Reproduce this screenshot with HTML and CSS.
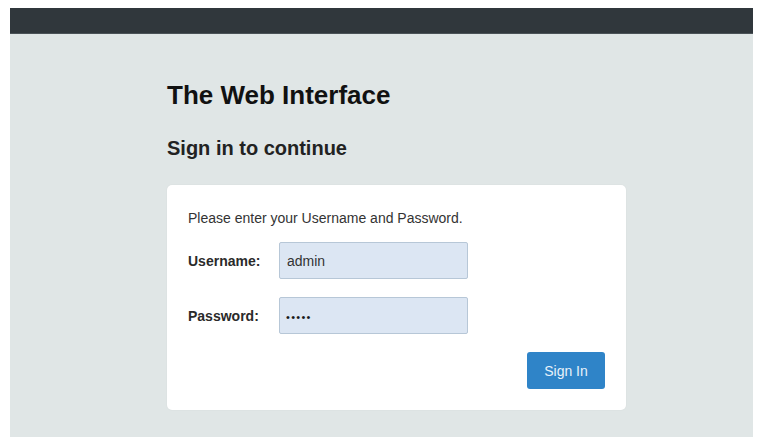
FILE: index.html
```html
<!DOCTYPE html>
<html lang="en">
<head>
<meta charset="utf-8">
<title>The Web Interface</title>
<link rel="stylesheet" href="styles.css">
</head>
<body>
<div class="page">
  <div class="topbar"></div>
  <main class="main">
    <h1 class="title">The Web Interface</h1>
    <h2 class="subtitle">Sign in to continue</h2>
    <form class="card">
      <p class="intro">Please enter your Username and Password.</p>
      <div class="row">
        <label class="label" for="user">Username:</label>
        <input class="field" id="user" type="text" value="admin">
      </div>
      <div class="row">
        <label class="label" for="pass">Password:</label>
        <input class="field field-secret" id="pass" type="password" value="admin">
      </div>
      <div class="actions">
        <button class="btn" type="button">Sign In</button>
      </div>
    </form>
  </main>
</div>
</body>
</html>
```

FILE: styles.css
```css
html, body {
  background: #ffffff;
}
body {
  margin: 8px 5px 10px 10px;
  font-family: "Liberation Sans", Arial, sans-serif;
  color: #333333;
}
.page {
  height: 429px;
  background: #e0e6e6;
  display: flex;
  flex-direction: column;
}
.topbar {
  height: 26px;
  background: #30373c;
  border-bottom: 1px solid #4a5257;
  box-sizing: border-box;
}
.main {
  padding-left: 157px;
  display: flex;
  flex-direction: column;
  align-items: flex-start;
}
.title {
  margin: 46px 0 0 0;
  font-size: 26px;
  line-height: 30px;
  font-weight: bold;
  color: #111111;
}
.subtitle {
  margin: 26px 0 0 0;
  font-size: 20px;
  line-height: 24px;
  font-weight: bold;
  color: #222222;
}
.card {
  margin-top: 25px;
  width: 459px;
  box-sizing: border-box;
  padding: 23px 21px 21px 21px;
  background: #ffffff;
  border-radius: 5px;
  box-shadow: 0 0 2px rgba(0, 0, 0, 0.06);
}
.intro {
  margin: 0 0 14px 0;
  font-size: 14px;
  line-height: 20px;
  color: #333333;
}
.row {
  display: flex;
  align-items: center;
  margin-bottom: 18px;
}
.row:last-of-type {
  margin-bottom: 0;
}
.label {
  width: 91px;
  font-size: 14px;
  font-weight: bold;
  color: #2a2a2a;
}
.field {
  width: 189px;
  height: 37px;
  box-sizing: border-box;
  margin: 0;
  padding: 0 7px;
  border: 1px solid #b7c7d7;
  border-radius: 2px;
  background: #dce6f3;
  font-family: "Liberation Sans", Arial, sans-serif;
  font-size: 14px;
  color: #333333;
  outline: none;
}
.field-secret {
  font-size: 11px;
  letter-spacing: 1.3px;
  padding-left: 6px;
  padding-top: 2px;
  color: #1a1a1a;
}
.actions {
  display: flex;
  justify-content: flex-end;
  margin-top: 17px;
}
.btn {
  width: 78px;
  height: 37px;
  border: none;
  border-radius: 3px;
  background: #2f84c8;
  color: #e8f1fa;
  font-family: "Liberation Sans", Arial, sans-serif;
  font-size: 14px;
  padding: 0;
  cursor: pointer;
}
```
